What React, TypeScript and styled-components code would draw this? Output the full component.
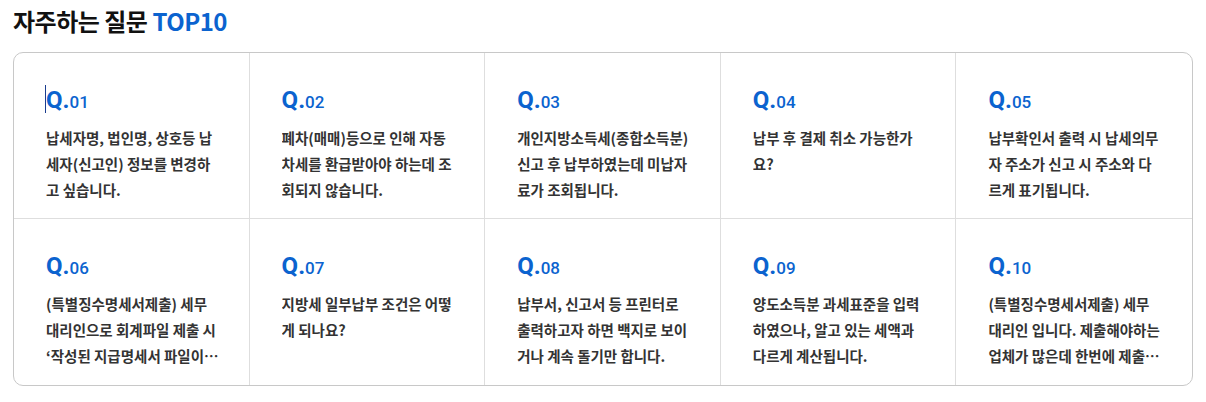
import styled, { createGlobalStyle } from "styled-components";

const faqs: string[] = [
    "납세자명, 법인명, 상호등 납세자(신고인) 정보를 변경하고 싶습니다.",
    "폐차(매매)등으로 인해 자동차세를 환급받아야 하는데 조회되지 않습니다.",
    "개인지방소득세(종합소득분) 신고 후 납부하였는데 미납자료가 조회됩니다.",
    "납부 후 결제 취소 가능한가요?",
    "납부확인서 출력 시 납세의무자 주소가 신고 시 주소와 다르게 표기됩니다.",
    "(특별징수명세서제출) 세무대리인으로 회계파일 제출 시 ‘작성된 지급명세서 파일이 없습니다’ 라는 메시지가 나옵니다.",
    "지방세 일부납부 조건은 어떻게 되나요?",
    "납부서, 신고서 등 프린터로 출력하고자 하면 백지로 보이거나 계속 돌기만 합니다.",
    "양도소득분 과세표준을 입력하였으나, 알고 있는 세액과 다르게 계산됩니다.",
    "(특별징수명세서제출) 세무대리인 입니다. 제출해야하는 업체가 많은데 한번에 제출할 수 있는 방법이 있나요?",
];

const App: React.FC = () => {
    return (
        <>
            <GlobalStyle />
            <Section>
                <Heading>
                    자주하는 질문 <Accent>TOP10</Accent>
                </Heading>
                <Board>
                    {faqs.map((q, i) => (
                        <Cell key={i} $lastCol={i % 5 === 4} $lastRow={i >= 5}>
                            <QLabel $caret={i === 0}>
                                Q.<Num>{String(i + 1).padStart(2, "0")}</Num>
                            </QLabel>
                            <Question>{q}</Question>
                        </Cell>
                    ))}
                </Board>
            </Section>
        </>
    );
};
export default App;

const GlobalStyle = createGlobalStyle`
    body {
        margin: 0;
        background: #fff;
        font-family: "Noto Sans CJK KR", "Noto Sans", sans-serif;
    }
`;

const Section = styled.div`
    padding: 4px 13px 0;
    width: 1180px;
`;

const Heading = styled.h2`
    margin: 0 0 14px;
    font-size: 24px;
    line-height: 34px;
    font-weight: 700;
    color: #111;
    letter-spacing: -0.5px;
`;

const Accent = styled.span`
    color: #0b63cf;
`;

const Board = styled.div`
    display: grid;
    grid-template-columns: repeat(5, 1fr);
    grid-auto-rows: 166px;
    border: 1px solid #c8c8c8;
    border-radius: 10px;
    overflow: hidden;
`;

const Cell = styled.div<{ $lastCol: boolean; $lastRow: boolean }>`
    padding: 32px 30px 0 32px;
    border-right: ${(p) => (p.$lastCol ? "none" : "1px solid #dedede")};
    border-bottom: ${(p) => (p.$lastRow ? "none" : "1px solid #dedede")};
`;

const QLabel = styled.div<{ $caret: boolean }>`
    position: relative;
    font-family: Roboto, "Noto Sans", sans-serif;
    font-size: 24px;
    line-height: 30px;
    font-weight: 700;
    color: #0b63cf;
    margin-bottom: 8px;

    &::before {
        content: "";
        display: ${(p) => (p.$caret ? "block" : "none")};
        position: absolute;
        left: -1px;
        top: 0;
        width: 1px;
        height: 28px;
        background: #1a3d8f;
    }
`;

const Num = styled.span`
    font-size: 17px;
    font-weight: 500;
`;

const Question = styled.p`
    margin: 0;
    font-size: 14.5px;
    line-height: 26px;
    font-weight: 700;
    color: #333;
    word-break: break-all;
    display: -webkit-box;
    -webkit-line-clamp: 3;
    -webkit-box-orient: vertical;
    overflow: hidden;
`;
